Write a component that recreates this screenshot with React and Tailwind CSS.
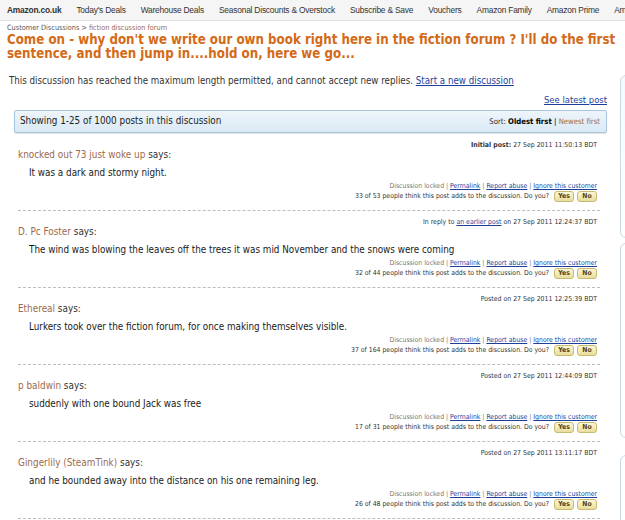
import React from "react";

const navItems = [
  "Today's Deals",
  "Warehouse Deals",
  "Seasonal Discounts & Overstock",
  "Subscribe & Save",
  "Vouchers",
  "Amazon Family",
  "Amazon Prime",
  "Amazon Pantry",
];

const posts = [
  {
    name: "knocked out 73 just woke up",
    kind: "initial",
    date: "27 Sep 2011 11:50:13 BDT",
    body: "It was a dark and stormy night.",
    votes: "33 of 53",
  },
  {
    name: "D. Pc Foster",
    kind: "reply",
    date: "27 Sep 2011 12:24:37 BDT",
    body: "The wind was blowing the leaves off the trees it was mid November and the snows were coming",
    votes: "32 of 44",
  },
  {
    name: "Ethereal",
    kind: "posted",
    date: "27 Sep 2011 12:25:39 BDT",
    body: "Lurkers took over the fiction forum, for once making themselves visible.",
    votes: "37 of 164",
  },
  {
    name: "p baldwin",
    kind: "posted",
    date: "27 Sep 2011 12:44:09 BDT",
    body: "suddenly with one bound Jack was free",
    votes: "17 of 31",
  },
  {
    name: "Gingerlily (SteamTink)",
    kind: "posted",
    date: "27 Sep 2011 13:11:17 BDT",
    body: "and he bounded away into the distance on his one remaining leg.",
    votes: "26 of 48",
  },
];

function VoteButton({ label, width }) {
  return (
    <span
      className={`inline-flex h-[11px] items-center justify-center rounded-[3px] border border-[#c9bb6e] bg-gradient-to-b from-[#fbf7d8] to-[#e8dd9c] text-[6.8px] font-bold text-[#4f4516] ${width}`}
    >
      {label}
    </span>
  );
}

function Post({ post, first }) {
  return (
    <div
      className={`border-b border-dashed border-[#bdbdbd] pt-[6px] pb-[8px] ${first ? "mt-[1px]" : ""}`}
    >
      {/* date line */}
      <div className="pr-[3px] text-right text-[6.9px] leading-[10px] text-[#333]">
        {post.kind === "initial" && (
          <>
            <b>Initial post:</b> {post.date}
          </>
        )}
        {post.kind === "reply" && (
          <>
            In reply to <a className="text-[#1d3f9a] underline">an earlier post</a> on {post.date}
          </>
        )}
        {post.kind === "posted" && <>Posted on {post.date}</>}
      </div>
      {/* author */}
      <div className="text-[9.9px] leading-[10px] text-[#333]">
        <span className="text-[#9c6a4e]">{post.name}</span> says:
      </div>
      {/* body */}
      <div className="mt-[7px] pl-[11px] text-[9.8px] leading-[12px] text-[#1a1a1a]">
        {post.body}
      </div>
      {/* footer */}
      <div className="mt-[3px] pr-[3px] text-right text-[6.85px] leading-[9px] text-[#777]">
        Discussion locked | <a className="text-[#1d3f9a] underline">Permalink</a> |{" "}
        <a className="text-[#1d3f9a] underline">Report abuse</a> |{" "}
        <a className="text-[#1d3f9a] underline">Ignore this customer</a>
      </div>
      <div className="flex h-[11px] items-center justify-end gap-[3px] pr-[3px] text-[6.85px] text-[#333]">
        <span className="mr-[2px]">
          {post.votes} people think this post adds to the discussion. Do you?
        </span>
        <VoteButton label="Yes" width="w-[20px]" />
        <VoteButton label="No" width="w-[20px]" />
      </div>
    </div>
  );
}

export default function App() {
  return (
    <div className="h-[520px] w-[625px] overflow-hidden bg-white font-['DejaVu_Sans_Condensed','DejaVu_Sans',Verdana,sans-serif] [font-stretch:condensed]">
      {/* top nav */}
      <div className="flex h-[21px] items-center gap-[15px] overflow-hidden whitespace-nowrap border-b border-[#e2e2e2] bg-[#f5f5f5] pl-[7px] font-['Liberation_Sans',Arial,sans-serif] text-[8.4px] tracking-[-0.2px] text-[#333]">
        <span className="font-bold">Amazon.co.uk</span>
        {navItems.map((n) => (
          <span key={n}>{n}</span>
        ))}
      </div>

      {/* breadcrumb + title */}
      <div className="pl-[7px] pt-[2px]">
        <div className="text-[7.3px] leading-[10px] text-[#555]">
          Customer Discussions &gt; <span className="text-[#9c6a4e]">fiction discussion forum</span>
        </div>
        <h1 className="whitespace-nowrap text-[13.2px] font-bold leading-[14px] text-[#d46a16]">
          Come on - why don't we write our own book right here in the fiction forum ? I'll do the first
          <br />
          sentence, and then jump in....hold on, here we go...
        </h1>
      </div>

      <div className="flex">
        {/* main column */}
        <div className="w-[612px] shrink-0">
          <div className="mt-[14px] pl-[9px] text-[9.7px] leading-[12px] text-[#333]">
            This discussion has reached the maximum length permitted, and cannot accept new replies.{" "}
            <a className="text-[#1d3f9a] underline">Start a new discussion</a>
          </div>
          <div className="mt-[7px] pr-[5px] text-right text-[9.4px] leading-[12px]">
            <a className="text-[#1d3f9a] underline">See latest post</a>
          </div>
          <div className="ml-[14px] mr-[5px] mt-[4px] flex h-[23px] items-center justify-between rounded-[2px] border border-[#a8c5db] bg-gradient-to-b from-[#eef5fb] to-[#d9e9f4] pl-[5px] pr-[6px] shadow-[0_1px_1px_rgba(0,0,0,0.12)]">
            <span className="text-[9.8px] text-[#222]">Showing 1-25 of 1000 posts in this discussion</span>
            <span className="text-[7.7px] text-[#333]">
              Sort: <b className="text-black">Oldest first</b> <b>|</b>{" "}
              <span className="text-[#9c6a4e]">Newest first</span>
            </span>
          </div>
          <div className="ml-[18px] mr-[12px]">
            {posts.map((p, i) => (
              <Post key={i} post={p} first={i === 0} />
            ))}
          </div>
        </div>

        {/* right sidebar, mostly off screen */}
        <div className="ml-[8px] w-[200px] shrink-0">
          <div className="mt-[14px] h-[163px] rounded-l-[6px] border border-[#c6dbe9] bg-gradient-to-b from-[#f4f9fc] to-white" />
          <div className="mt-[5px] h-[195px] rounded-l-[6px] border border-[#c6dbe9] bg-white" />
          <div className="mt-[17px] h-[120px] rounded-l-[6px] border border-[#c6dbe9] bg-white" />
        </div>
      </div>
    </div>
  );
}
